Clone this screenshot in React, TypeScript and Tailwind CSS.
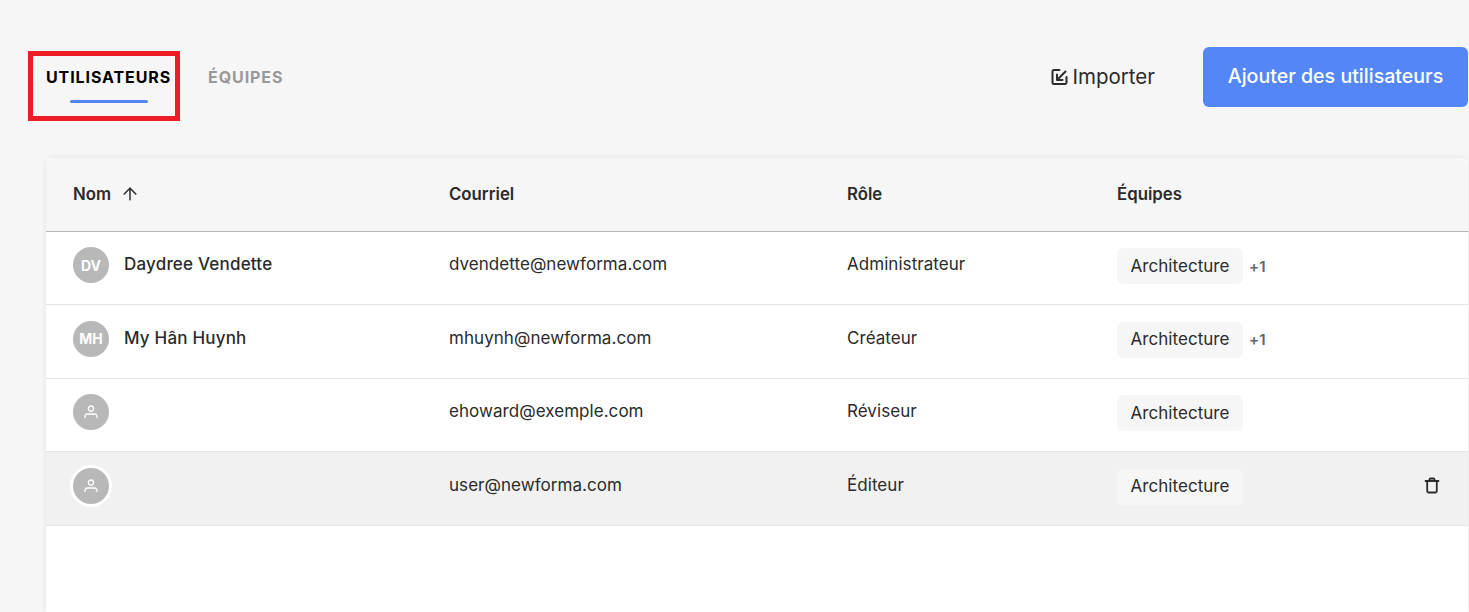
import { ArrowUp } from 'lucide-react';
import { clsx } from 'clsx';

interface UserRow {
  initials?: string;
  name?: string;
  email: string;
  role: string;
  extra?: number;
  hovered?: boolean;
}

const USERS: UserRow[] = [
  { initials: 'DV', name: 'Daydree Vendette', email: 'dvendette@newforma.com', role: 'Administrateur', extra: 1 },
  { initials: 'MH', name: 'My Hân Huynh', email: 'mhuynh@newforma.com', role: 'Créateur', extra: 1 },
  { email: 'ehoward@exemple.com', role: 'Réviseur' },
  { email: 'user@newforma.com', role: 'Éditeur', hovered: true },
];

function ImportIcon() {
  return (
    <svg width="18" height="18" viewBox="0 0 18 18" fill="none" stroke="#2b2b2b" strokeWidth="2" strokeLinecap="round" strokeLinejoin="round">
      <path d="M8.5 2H3a1.5 1.5 0 0 0-1.5 1.5v11A1.5 1.5 0 0 0 3 16h11a1.5 1.5 0 0 0 1.5-1.5V9" />
      <path d="M14.5 3.5 6.5 11.5" />
      <path d="M6 6.5v5.5h5.5" />
    </svg>
  );
}

function PersonIcon() {
  return (
    <svg width="14" height="14" viewBox="0 0 14 14" fill="none" stroke="#fff" strokeWidth="1.3">
      <circle cx="7" cy="3.6" r="2.6" />
      <path d="M1 13v-1.5A2.5 2.5 0 0 1 3.5 9h7a2.5 2.5 0 0 1 2.5 2.5V13" />
    </svg>
  );
}

function TrashIcon() {
  return (
    <svg width="16" height="17" viewBox="0 0 16 17" fill="none" stroke="#2b2b2b" strokeWidth="1.8" strokeLinecap="round" strokeLinejoin="round">
      <path d="M1.5 4h13" />
      <path d="M5.5 4V2.5a1 1 0 0 1 1-1h3a1 1 0 0 1 1 1V4" />
      <path d="M3.2 4v10a1.5 1.5 0 0 0 1.5 1.5h6.6a1.5 1.5 0 0 0 1.5-1.5V4" />
    </svg>
  );
}

function Avatar({ initials, hovered }: { initials?: string; hovered?: boolean }) {
  return (
    <div
      className={clsx(
        'flex h-9 w-9 shrink-0 items-center justify-center rounded-full bg-[#b8b8b8] text-[14px] font-bold text-white',
        hovered && 'shadow-[0_0_0_3px_#ffffff]'
      )}
    >
      {initials ?? <PersonIcon />}
    </div>
  );
}

function Row({ user }: { user: UserRow }) {
  return (
    <div
      className={clsx(
        'grid h-[73.5px] grid-cols-[376px_398px_270px_1fr] items-center border-b border-[#e4e4e4] pb-[5.5px] pl-[27px] text-[17px] tracking-[0.05px] text-[#2b2b2b]',
        user.hovered && 'bg-[#f1f1f1]'
      )}
    >
      <div className="flex items-center gap-[15px]">
        <Avatar initials={user.initials} hovered={user.hovered} />
        {user.name && <span className="font-medium tracking-[0.2px]">{user.name}</span>}
      </div>
      <span>{user.email}</span>
      <span>{user.role}</span>
      <div className="flex items-center justify-between pr-[28px]">
        <div className="mt-[2px] flex items-center gap-[6px]">
          <span className="flex h-9 w-[126px] items-center justify-center rounded-md bg-[#f6f6f6] pt-px text-[#2b2b2b]">
            Architecture
          </span>
          {user.extra && <span className="mt-[2px] text-[15px] font-semibold text-[#666666]">+{user.extra}</span>}
        </div>
        {user.hovered && <TrashIcon />}
      </div>
    </div>
  );
}

export default function App() {
  return (
    <div className="relative flex h-[612px] flex-col overflow-hidden bg-[#f6f6f6] pt-[47px] pl-[46px] pr-px font-['Inter',sans-serif]">
      {/* Tabs + actions */}
      <div className="flex h-[60px] items-center justify-between">
        <div className="flex items-center gap-[37px] text-[16px] font-bold tracking-[0.9px]">
          <div className="relative text-black">
            UTILISATEURS
            <div className="absolute left-[24px] top-[35px] h-[3px] w-[78px] rounded-sm bg-[#5487f5]" />
          </div>
          <div className="text-[#999999]">ÉQUIPES</div>
        </div>
        <div className="flex items-center">
          <div className="flex items-center gap-[3px] text-[20.5px] text-[#2b2b2b]">
            <ImportIcon />
            Importer
          </div>
          <button className="ml-12 h-[60px] w-[265px] rounded-md bg-[#5487f5] text-[19.6px] font-medium text-white">
            Ajouter des utilisateurs
          </button>
        </div>
      </div>

      {/* Table */}
      <div className="mt-[51px] flex-1 rounded-t-md bg-white shadow-[0_0_6px_rgba(0,0,0,0.08)]">
        <div className="grid h-[73.5px] grid-cols-[376px_398px_270px_1fr] items-center border-b border-[#b5b5b5] bg-[#f6f6f6] pl-[27px] text-[16.8px] font-semibold text-[#2b2b2b]">
          <span className="flex items-center gap-[9px]">
            Nom <ArrowUp size={20} strokeWidth={1.8} />
          </span>
          <span>Courriel</span>
          <span>Rôle</span>
          <span>Équipes</span>
        </div>
        {USERS.map((user) => (
          <Row key={user.email} user={user} />
        ))}
      </div>

      {/* Annotation */}
      <div className="absolute left-[28px] top-[51px] h-[70px] w-[152px] border-[5px] border-[#ee1c25]" />
    </div>
  );
}
